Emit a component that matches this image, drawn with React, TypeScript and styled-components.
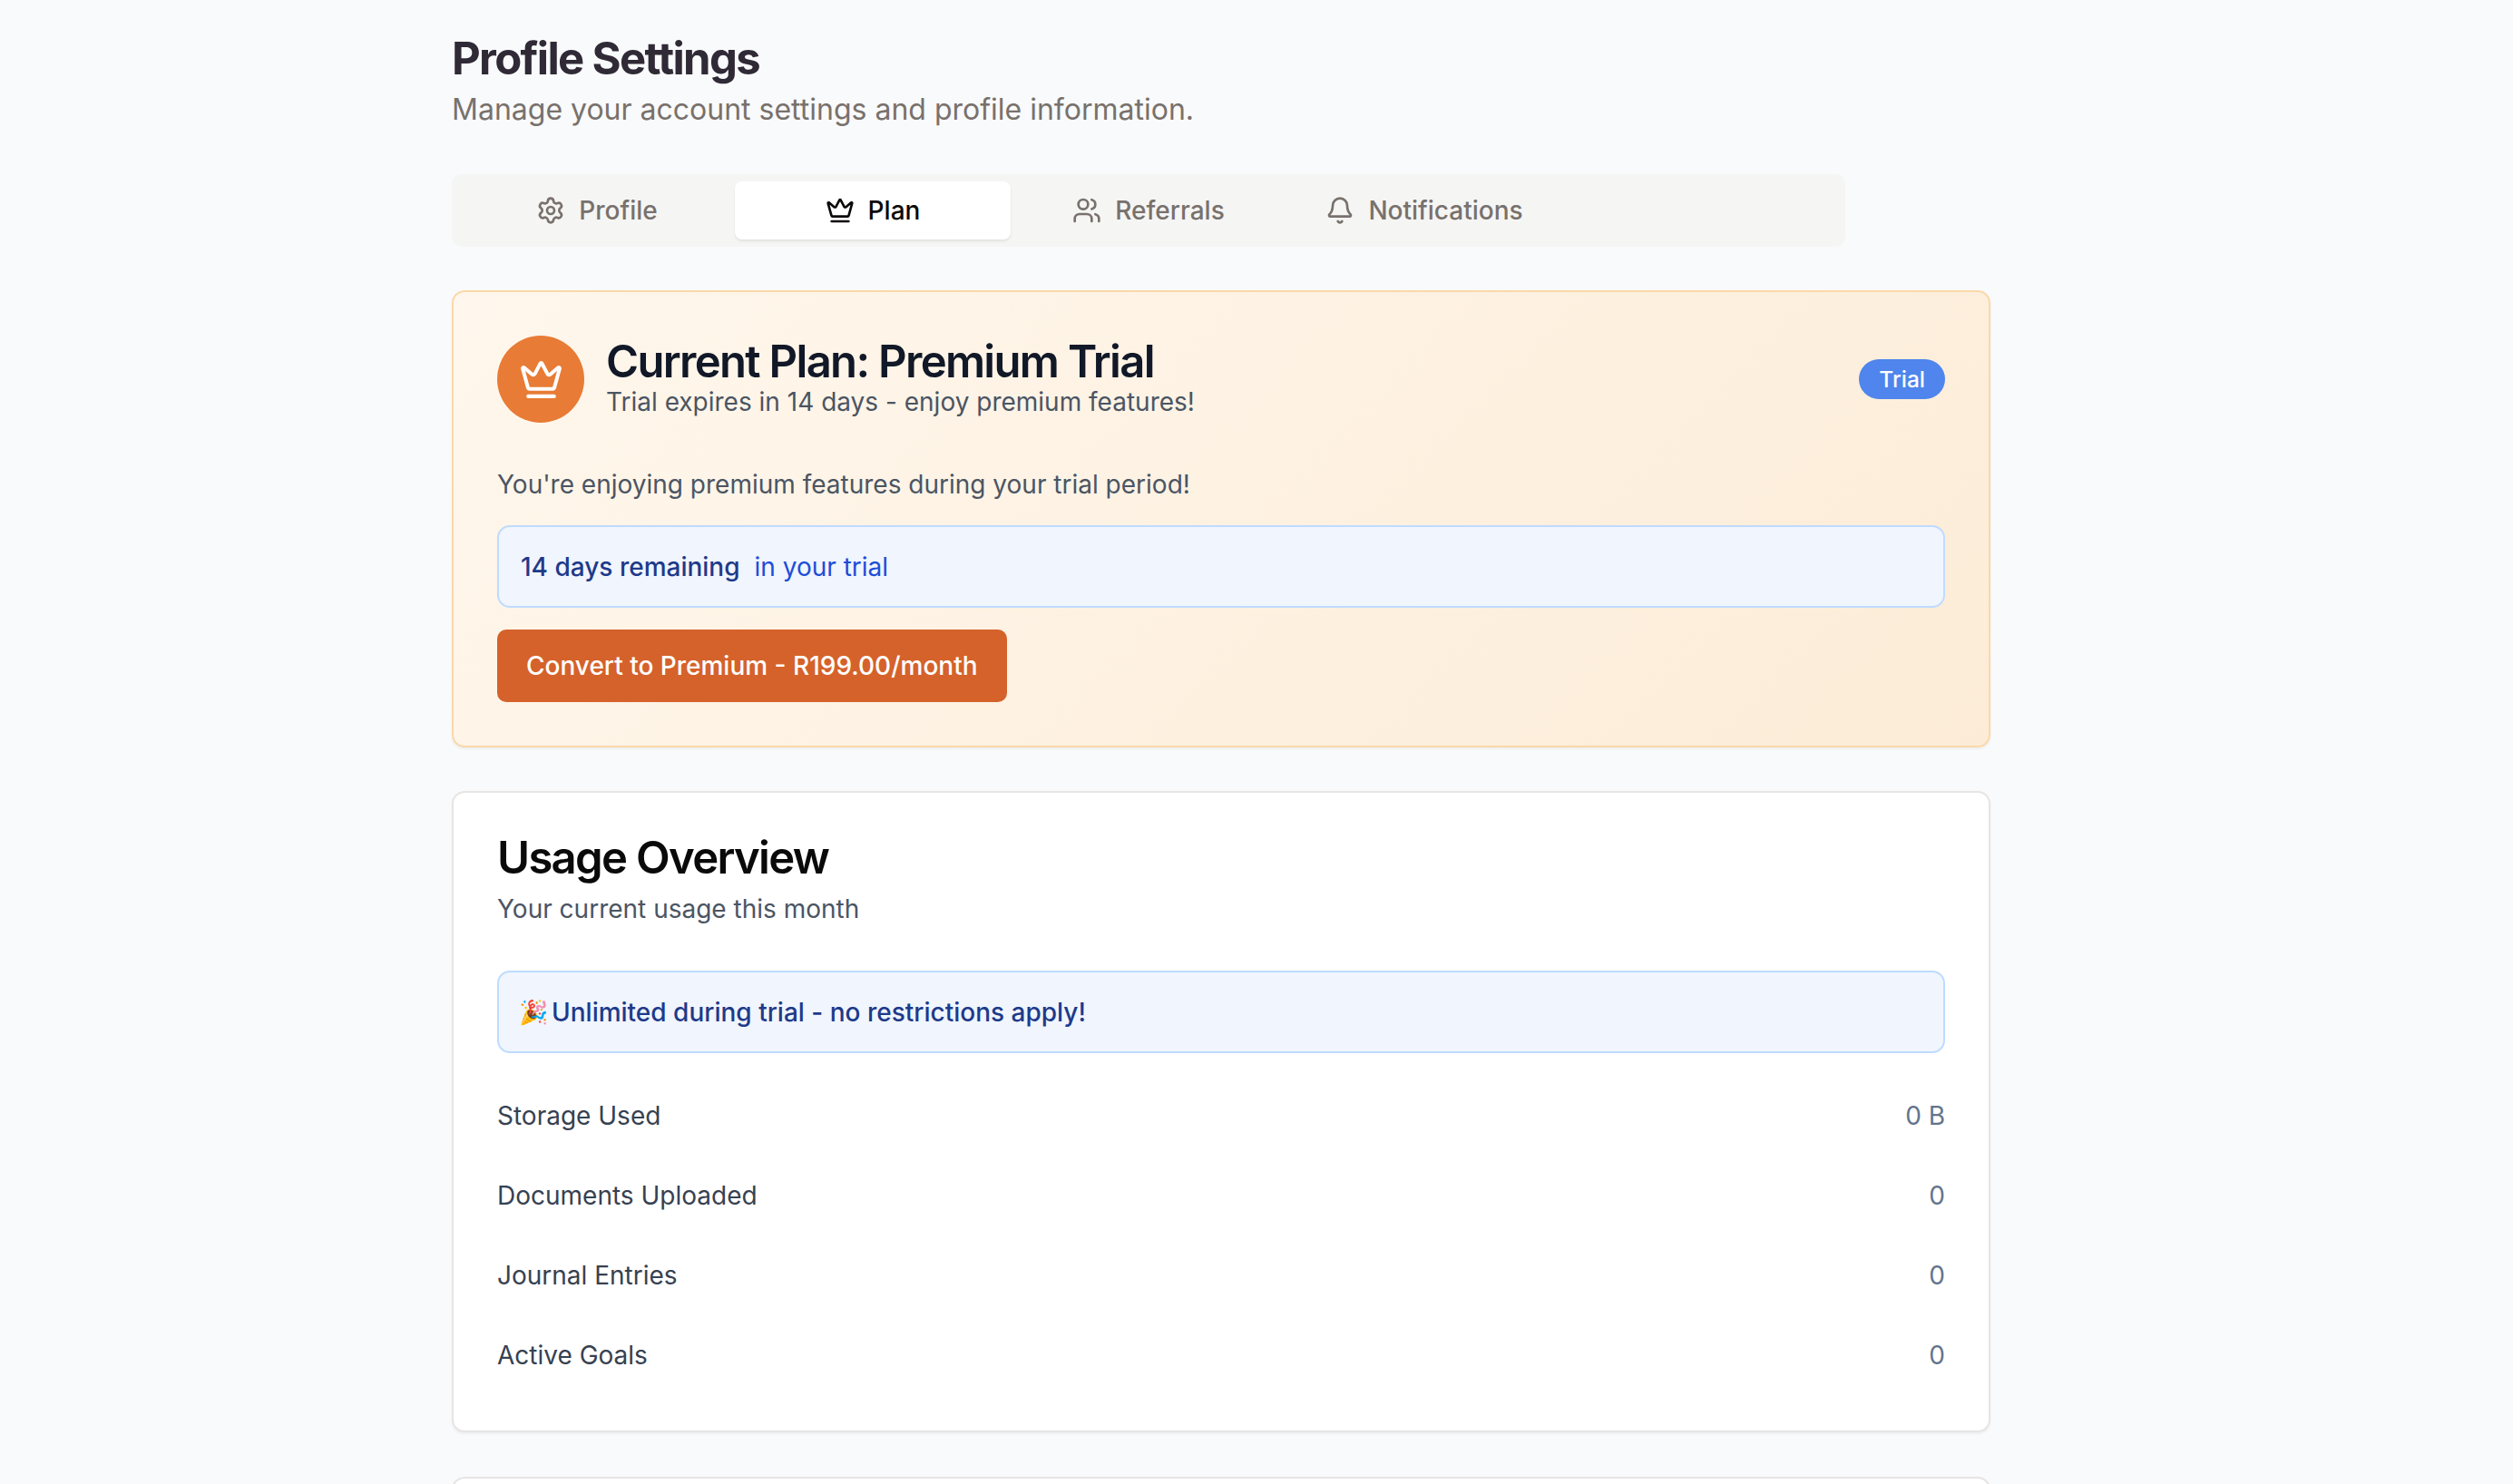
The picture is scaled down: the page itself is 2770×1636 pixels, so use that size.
import React from 'react';
import styled, { createGlobalStyle } from 'styled-components';
import { Bell, Crown, Settings, Users } from 'lucide-react';

const GlobalStyle = createGlobalStyle`
  html, body {
    margin: 0;
    padding: 0;
    height: 1636px;
    overflow: hidden;
    background-color: #f9fafb;
    font-family: Inter, "Noto Sans", sans-serif;
  }
  * {
    box-sizing: border-box;
  }
`;

// Page
const Page = styled.div`
  height: 1636px;
  overflow: hidden;
  padding: 35px 576px 0 498px;
`;

const PageTitle = styled.h1`
  margin: 0;
  font-size: 49px;
  font-weight: 700;
  line-height: 60px;
  letter-spacing: -1.65px;
  color: #2f2a35;
`;

const PageSubtitle = styled.p`
  margin: 0;
  font-size: 32px;
  line-height: 52px;
  color: #78716c;
`;

// Tabs
const TabList = styled.div`
  display: grid;
  grid-template-columns: repeat(5, 1fr);
  width: 1536px;
  height: 80px;
  margin: 45px 0 48px 0;
  padding: 8px;
  background-color: #f5f5f4;
  border-radius: 10.5px;
`;

const Tab = styled.div<{ $active?: boolean }>`
  display: flex;
  align-items: center;
  justify-content: center;
  gap: 15px;
  font-size: 28px;
  font-weight: 500;
  border-radius: 8px;
  color: ${(p) => (p.$active ? '#0c0a09' : '#78716c')};
  background-color: ${(p) => (p.$active ? '#ffffff' : 'transparent')};
  box-shadow: ${(p) => (p.$active ? '0 2px 3px rgba(0, 0, 0, 0.08)' : 'none')};
`;

// Cards
const Card = styled.section`
  margin-bottom: 49px;
  padding: 48px;
  background-color: #ffffff;
  border: 2px solid #e7e5e4;
  border-radius: 14px;
  box-shadow: 0 2px 3px rgba(0, 0, 0, 0.05);
`;

const PlanCard = styled(Card)`
  height: 504px;
  margin-bottom: 48px;
  background: linear-gradient(135deg, #fff7ed 0%, #fcecd7 100%);
  border-color: #fbd8a9;
`;

const PlanHeader = styled.div`
  display: flex;
  align-items: center;
  justify-content: space-between;
`;

const PlanHeading = styled.div`
  display: flex;
  align-items: center;
  gap: 24px;
`;

const PlanIcon = styled.div`
  display: flex;
  align-items: center;
  justify-content: center;
  width: 96px;
  height: 96px;
  border-radius: 50%;
  background-color: #e87b35;
  color: #ffffff;
`;

const CardTitle = styled.h2<{ $color: string }>`
  margin: 0;
  font-size: 49px;
  font-weight: 600;
  line-height: 52.5px;
  letter-spacing: -1.68px;
  color: ${(p) => p.$color};
`;

const CardSubtitle = styled.p`
  margin: 0;
  font-size: 28px;
  line-height: 42px;
  color: #4b5563;
`;

const PlanSubtitle = styled(CardSubtitle)`
  margin-top: -3.5px;
`;

const UsageSubtitle = styled(CardSubtitle)`
  margin-top: 8.5px;
`;

const Badge = styled.span`
  display: flex;
  align-items: center;
  height: 44px;
  padding: 0 22px;
  border-radius: 22px;
  font-size: 24.5px;
  font-weight: 500;
  color: #ffffff;
  background-color: #4f85ed;
`;

const Note = styled.p`
  margin: 47px 0 0 0;
  font-size: 28px;
  line-height: 42px;
  color: #4b5563;
`;

const Alert = styled.div`
  display: flex;
  align-items: center;
  height: 91px;
  padding: 0 24px;
  border: 2px solid #bfdbfe;
  border-radius: 14px;
  background-color: #f0f5fe;
  font-size: 28px;
  color: #1e3a8a;
`;

const TrialAlert = styled(Alert)`
  margin-top: 24px;
`;

const Strong = styled.span`
  font-weight: 500;
  margin-right: 16px;
`;

const Light = styled.span`
  color: #1d4ed8;
`;

const ConvertButton = styled.button`
  display: block;
  height: 80px;
  margin-top: 24px;
  padding: 0 32px;
  border: none;
  border-radius: 10px;
  background-color: #d5622b;
  color: #ffffff;
  font-family: inherit;
  font-size: 28px;
  font-weight: 500;
`;

// Usage
const UsageCard = styled(Card)`
  height: 707px;
  padding-top: 46px;
`;

const UsageAlert = styled(Alert)`
  margin-top: 47px;
  font-weight: 500;
`;

const Emoji = styled.span`
  font-size: 26px;
  margin: 0 4px 0 -2px;
`;

const UsageRows = styled.div`
  margin-top: 24.5px;
`;

const UsageRow = styled.div`
  display: flex;
  align-items: center;
  justify-content: space-between;
  height: 88px;
  font-size: 28px;
`;

const UsageLabel = styled.span`
  color: #374151;
`;

const UsageValue = styled.span`
  color: #64748b;
`;

const EmptyCard = styled(Card)`
  height: 400px;
`;

const tabs = [
  { label: 'Profile', icon: Settings },
  { label: 'Plan', icon: Crown, active: true },
  { label: 'Referrals', icon: Users },
  { label: 'Notifications', icon: Bell },
];

const usage = [
  { label: 'Storage Used', value: '0 B' },
  { label: 'Documents Uploaded', value: '0' },
  { label: 'Journal Entries', value: '0' },
  { label: 'Active Goals', value: '0' },
];

export default function App() {
  return (
    <Page>
      <GlobalStyle />
      <PageTitle>Profile Settings</PageTitle>
      <PageSubtitle>Manage your account settings and profile information.</PageSubtitle>

      <TabList>
        {tabs.map((tab) => (
          <Tab key={tab.label} $active={tab.active}>
            <tab.icon size={32} strokeWidth={2} />
            {tab.label}
          </Tab>
        ))}
      </TabList>

      <PlanCard>
        <PlanHeader>
          <PlanHeading>
            <PlanIcon>
              <Crown size={49} strokeWidth={2} />
            </PlanIcon>
            <div>
              <CardTitle $color="#111827">Current Plan: Premium Trial</CardTitle>
              <PlanSubtitle>Trial expires in 14 days - enjoy premium features!</PlanSubtitle>
            </div>
          </PlanHeading>
          <Badge>Trial</Badge>
        </PlanHeader>
        <Note>You're enjoying premium features during your trial period!</Note>
        <TrialAlert>
          <Strong>14 days remaining</Strong>
          <Light>in your trial</Light>
        </TrialAlert>
        <ConvertButton>Convert to Premium - R199.00/month</ConvertButton>
      </PlanCard>

      <UsageCard>
        <CardTitle $color="#0a0a0a">Usage Overview</CardTitle>
        <UsageSubtitle>Your current usage this month</UsageSubtitle>
        <UsageAlert>
          <Emoji>🎉</Emoji>
          Unlimited during trial - no restrictions apply!
        </UsageAlert>
        <UsageRows>
          {usage.map((row) => (
            <UsageRow key={row.label}>
              <UsageLabel>{row.label}</UsageLabel>
              <UsageValue>{row.value}</UsageValue>
            </UsageRow>
          ))}
        </UsageRows>
      </UsageCard>

      <EmptyCard />
    </Page>
  );
}
